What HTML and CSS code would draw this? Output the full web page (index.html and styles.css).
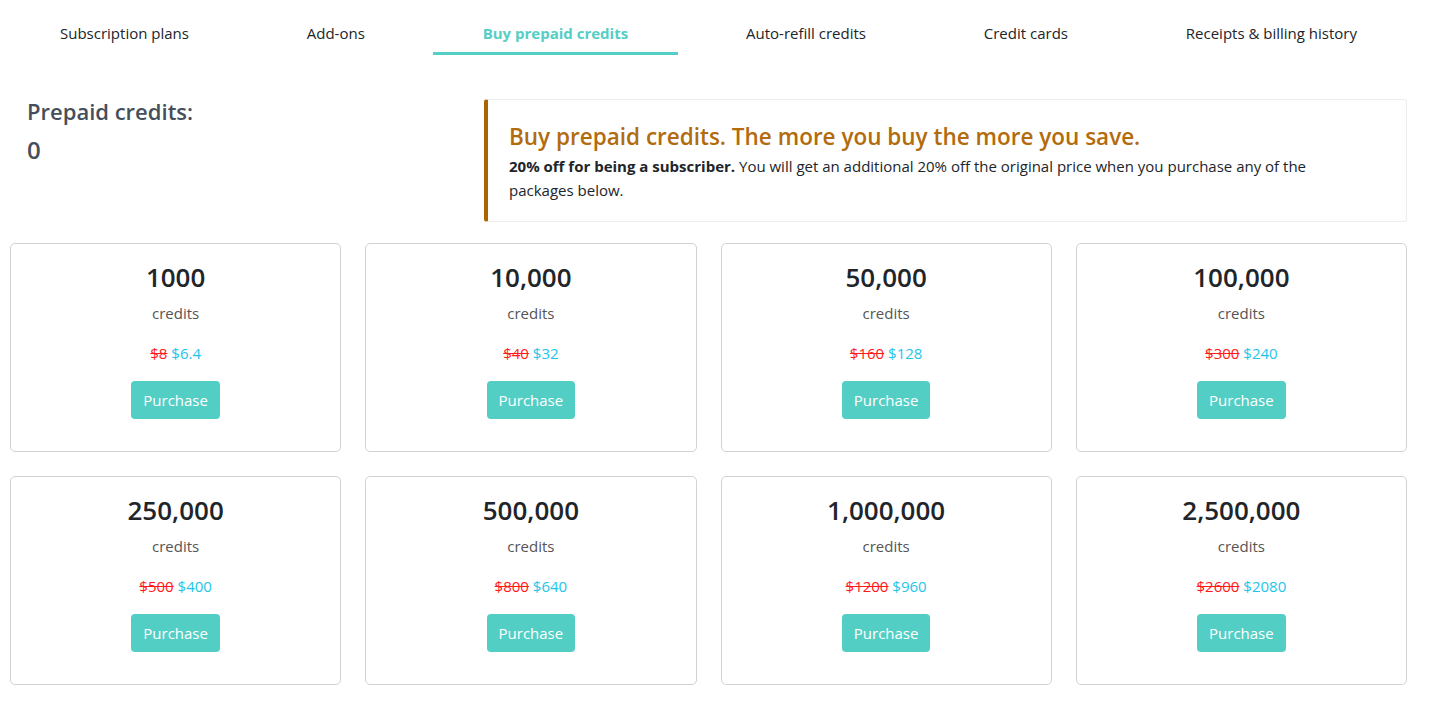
FILE: index.html
```html
<!DOCTYPE html>
<html>
<head>
<meta charset="utf-8">
<link rel="stylesheet" href="styles.css">
</head>
<body>
<div class="page">
  <nav class="tabs">
    <a class="tab">Subscription plans</a>
    <a class="tab">Add-ons</a>
    <a class="tab active">Buy prepaid credits</a>
    <a class="tab">Auto-refill credits</a>
    <a class="tab">Credit cards</a>
    <a class="tab">Receipts &amp; billing history</a>
  </nav>
  <section class="summary">
    <div class="balance">
      <div class="balance-label">Prepaid credits:</div>
      <div class="balance-value">0</div>
    </div>
    <div class="notice">
      <div class="notice-title">Buy prepaid credits. The more you buy the more you save.</div>
      <p class="notice-text"><b>20% off for being a subscriber.</b> You will get an additional 20% off the original price when you purchase any of the packages below.</p>
    </div>
  </section>
  <section class="grid">
    <div class="card"><div class="amount">1000</div><div class="unit">credits</div><div class="price"><s class="old">$8</s> <span class="new">$6.4</span></div><button class="buy">Purchase</button></div>
    <div class="card"><div class="amount">10,000</div><div class="unit">credits</div><div class="price"><s class="old">$40</s> <span class="new">$32</span></div><button class="buy">Purchase</button></div>
    <div class="card"><div class="amount">50,000</div><div class="unit">credits</div><div class="price"><s class="old">$160</s> <span class="new">$128</span></div><button class="buy">Purchase</button></div>
    <div class="card"><div class="amount">100,000</div><div class="unit">credits</div><div class="price"><s class="old">$300</s> <span class="new">$240</span></div><button class="buy">Purchase</button></div>
    <div class="card"><div class="amount">250,000</div><div class="unit">credits</div><div class="price"><s class="old">$500</s> <span class="new">$400</span></div><button class="buy">Purchase</button></div>
    <div class="card"><div class="amount">500,000</div><div class="unit">credits</div><div class="price"><s class="old">$800</s> <span class="new">$640</span></div><button class="buy">Purchase</button></div>
    <div class="card"><div class="amount">1,000,000</div><div class="unit">credits</div><div class="price"><s class="old">$1200</s> <span class="new">$960</span></div><button class="buy">Purchase</button></div>
    <div class="card"><div class="amount">2,500,000</div><div class="unit">credits</div><div class="price"><s class="old">$2600</s> <span class="new">$2080</span></div><button class="buy">Purchase</button></div>
  </section>
</div>
</body>
</html>
```

FILE: styles.css
```css
* { box-sizing: border-box; }
html, body { margin: 0; padding: 0; background: #fff; }
body {
  font-family: "Open Sans", "Noto Sans", sans-serif;
  font-size: 15px;
  color: #212529;
}
.page {
  width: 1397px;
  margin-left: 10px;
}
.tabs {
  display: flex;
  justify-content: space-between;
  padding-top: 23px;
}
.tab {
  display: block;
  padding: 0 50px 9px;
  line-height: 20px;
  color: #212529;
  border-bottom: 3px solid transparent;
  white-space: nowrap;
}
.tab.active {
  color: #55cec5;
  font-weight: 700;
  border-bottom-color: #55cec5;
}
.summary {
  display: grid;
  grid-template-columns: 474px 1fr;
  margin-top: 44px;
}
.balance {
  padding-left: 17px;
  color: #454f5b;
  font-weight: 600;
}
.balance-label {
  font-size: 22px;
  line-height: 26px;
  margin-top: -1px;
}
.balance-value {
  font-size: 24px;
  line-height: 32px;
  margin-top: 10px;
}
.notice {
  border: 1px solid #ececec;
  border-left: 4px solid #a96500;
  border-radius: 3px;
  padding: 20px 70px 16px 21px;
  height: 123px;
}
.notice-title {
  color: #b26b0d;
  font-size: 22.5px;
  font-weight: 600;
  line-height: 34px;
}
.notice-text {
  margin: 0;
  line-height: 24px;
}
.notice-text b { font-weight: 700; }
.grid {
  display: grid;
  grid-template-columns: repeat(4, 1fr);
  gap: 24px 24px;
  margin-top: 21px;
}
.card {
  border: 1px solid #d2d2d2;
  border-radius: 5px;
  height: 209px;
  display: flex;
  flex-direction: column;
  align-items: center;
  padding-top: 15px;
}
.amount {
  font-size: 26px;
  font-weight: 600;
  line-height: 36px;
  color: #212529;
}
.unit {
  margin-top: 8px;
  color: #555;
  line-height: 20px;
}
.price {
  margin-top: 20px;
  line-height: 20px;
}
.old { color: #ff1a1a; }
.new { color: #24c5ea; }
.buy {
  margin-top: 18px;
  height: 38px;
  padding: 0 12px;
  border: 0;
  border-radius: 4px;
  background: #53cec4;
  color: #fff;
  font-family: inherit;
  font-size: 15px;
}
```
